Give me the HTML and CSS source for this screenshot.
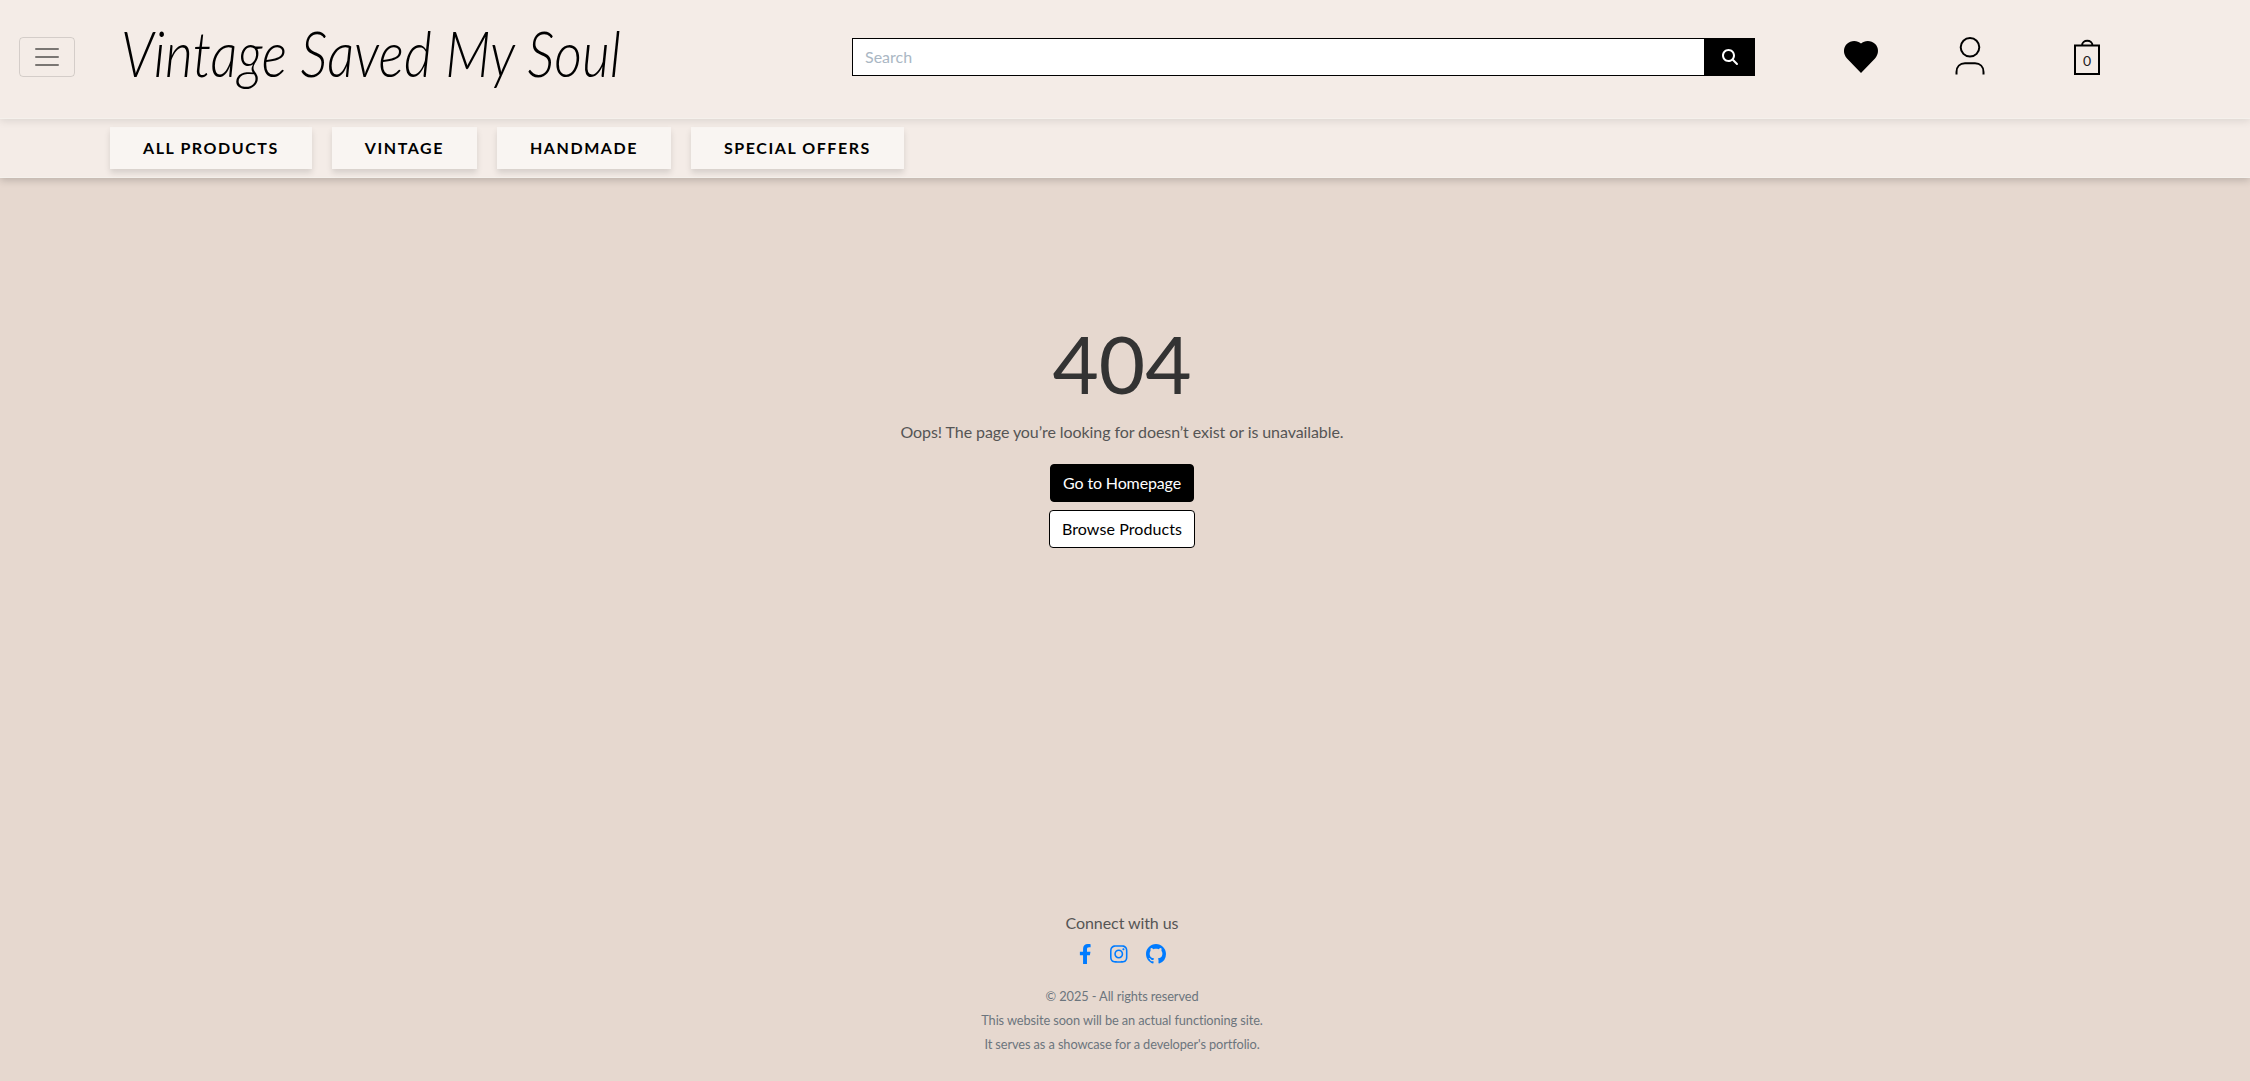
FILE: index.html
```html
<!DOCTYPE html>
<html lang="en">
<head>
<meta charset="utf-8">
<title>Vintage Saved My Soul</title>
<link rel="stylesheet" href="styles.css">
</head>
<body>
<header class="header">
  <button class="toggler" aria-label="Menu"><svg width="30" height="30" viewBox="0 0 30 30"><path d="M4 7h22M4 15h22M4 23h22" stroke="#000" stroke-opacity=".5" stroke-width="2" stroke-linecap="round"/></svg></button>
  <a class="logo"><svg width="540" height="104" viewBox="0 0 540 104"><text x="10" y="70" textLength="500" lengthAdjust="spacingAndGlyphs">Vintage Saved My Soul</text></svg></a>
  <form class="search">
    <input class="search-input" placeholder="Search">
    <button class="search-button" type="button" aria-label="Search"><svg width="16" height="16" viewBox="0 0 512 512"><path fill="#fff" d="M416 208c0 45.900-14.900 88.300-40 122.700L502.600 457.400c12.500 12.500 12.500 32.800 0 45.300s-32.800 12.500-45.300 0L330.700 376c-34.400 25.200-76.800 40-122.700 40C93.100 416 0 322.900 0 208S93.100 0 208 0S416 93.100 416 208zM208 352a144 144 0 1 0 0-288 144 144 0 1 0 0 288z"/></svg></button>
  </form>
  <div class="actions">
    <svg class="heart" width="34" height="32" viewBox="0 0 34 32"><path d="M17 32L3 17.500C-1 13-1 6.600 2.800 3C7-1 13.500-.7 17 2.600C20.500-.7 27-1 31.200 3C35 6.600 35 13 31 17.500Z"/></svg>
    <svg class="person" width="30" height="38" viewBox="0 0 30 38"><g fill="none" stroke="#000" stroke-width="2"><circle cx="15" cy="10.300" r="9.300"/><path d="M1.500 37.500V35C1.500 29.500 5 26.300 10 26.300H20C25 26.300 28.500 29.500 28.500 35V37.500"/></g></svg>
    <div class="bag"><svg width="26" height="36" viewBox="0 0 26 36"><path d="M1 6.500H25V35H1ZM8 6.500C8 .2 18.500 .2 18.500 6.500" fill="none" stroke="#000" stroke-width="2"/></svg><span class="count">0</span></div>
  </div>
</header>
<nav class="nav"><a class="nav-link">All Products</a><a class="nav-link">Vintage</a><a class="nav-link">Handmade</a><a class="nav-link">Special Offers</a></nav>
<main class="main">
  <h1 class="code">404</h1>
  <p class="message">Oops! The page you’re looking for doesn’t exist or is unavailable.</p>
  <a class="btn btn-dark">Go to Homepage</a>
  <a class="btn btn-light">Browse Products</a>
</main>
<footer class="footer">
  <p class="connect">Connect with us</p>
  <div class="social">
    <svg width="12.500" height="20" viewBox="0 0 320 512"><path d="M279.140 288l14.220-92.660h-88.910v-60.130c0-25.350 12.420-50.060 52.240-50.060h40.420V6.260S260.430 0 225.360 0c-73.220 0-121.080 44.380-121.080 124.720v70.620H22.890V288h81.390v224h100.170V288z"/></svg>
    <svg width="17.500" height="20" viewBox="0 0 448 512"><path d="M224.100 141c-63.600 0-114.900 51.300-114.900 114.900s51.300 114.900 114.900 114.900S339 319.500 339 255.900 287.700 141 224.100 141zm0 189.600c-41.100 0-74.700-33.500-74.700-74.700s33.500-74.700 74.700-74.700 74.700 33.500 74.700 74.700-33.600 74.700-74.700 74.700zm146.400-194.300c0 14.900-12 26.800-26.800 26.800-14.900 0-26.800-12-26.800-26.800s12-26.800 26.800-26.800 26.800 12 26.800 26.800zm76.100 27.200c-1.700-35.900-9.900-67.700-36.200-93.900-26.200-26.200-58-34.400-93.900-36.200-37-2.100-147.900-2.100-184.900 0-35.800 1.700-67.600 9.900-93.900 36.100s-34.400 58-36.200 93.900c-2.100 37-2.100 147.900 0 184.900 1.700 35.900 9.900 67.700 36.200 93.900s58 34.400 93.900 36.200c37 2.100 147.900 2.100 184.900 0 35.900-1.700 67.700-9.900 93.900-36.200 26.200-26.200 34.400-58 36.200-93.900 2.100-37 2.100-147.800 0-184.800zM398.800 388c-7.800 19.600-22.900 34.700-42.600 42.600-29.500 11.700-99.500 9-132.100 9s-102.700 2.600-132.100-9c-19.600-7.800-34.700-22.900-42.600-42.600-11.700-29.500-9-99.500-9-132.100s-2.600-102.700 9-132.100c7.800-19.600 22.900-34.700 42.600-42.600 29.500-11.700 99.500-9 132.100-9s102.700-2.600 132.100 9c19.600 7.800 34.700 22.900 42.600 42.600 11.700 29.500 9 99.500 9 132.100s2.700 102.700-9 132.100z"/></svg>
    <svg width="20" height="20" viewBox="0 0 16 16"><path d="M8 0C3.580 0 0 3.580 0 8c0 3.540 2.290 6.530 5.470 7.590.4.070.55-.17.55-.38 0-.19-.01-.82-.01-1.490-2.010.37-2.530-.49-2.690-.94-.09-.23-.48-.94-.82-1.130-.28-.15-.68-.52-.01-.53.63-.01 1.080.58 1.230.82.72 1.210 1.870.87 2.330.66.07-.52.28-.87.51-1.070-1.780-.2-3.640-.89-3.640-3.950 0-.87.31-1.590.82-2.150-.08-.2-.36-1.020.08-2.120 0 0 .67-.21 2.200.82.640-.18 1.320-.27 2-.27s1.360.09 2 .27c1.530-1.040 2.200-.82 2.200-.82.440 1.100.16 1.920.08 2.120.51.560.82 1.270.82 2.150 0 3.070-1.870 3.750-3.650 3.950.29.25.54.73.54 1.480 0 1.070-.01 1.930-.01 2.200 0 .21.15.46.55.38A8.010 8.010 0 0 0 16 8c0-4.420-3.580-8-8-8z"/></svg>
  </div>
  <p class="note">© 2025 - All rights reserved</p>
  <p class="note">This website soon will be an actual functioning site.</p>
  <p class="note">It serves as a showcase for a developer's portfolio.</p>
</footer>
</body>
</html>
```
FILE: styles.css
```css
* { box-sizing: border-box; }
body { margin: 0; height: 1081px; display: flex; flex-direction: column; background: #e6d8cf; font: 16px/24px Lato, sans-serif; color: #555; overflow: hidden; }
p, h1 { margin: 0; }
svg { display: block; overflow: visible; }
.header { height: 119px; flex: none; display: flex; align-items: flex-start; background: #f4ece7; border-bottom: 1px solid #f5f1ec; box-shadow: 0 2px 8px rgba(0,0,0,.1); position: relative; z-index: 2; }
.toggler { width: 56px; height: 40px; flex: none; margin: 37px 0 0 19px; padding: 4px 12px; border: 1px solid rgba(0,0,0,.13); border-radius: 4px; background: none; }
.logo { margin: 7px 0 0 36px; width: 540px; flex: none; }
.logo text { font: italic 300 64px Lato, cursive; fill: #000; }
.search { display: flex; margin: 38px 0 0 201px; width: 903px; height: 38px; flex: none; }
.search-input { flex: 1; border: 1px solid #000; padding: 6px 12px; font: 16px/24px Lato, sans-serif; border-radius: 0; background: #fff; }
.search-input::placeholder { color: #aab7c4; opacity: 1; }
.search-button { width: 50px; border: 0; background: #000; display: grid; place-items: center; padding: 0; }
.actions { display: flex; }
.heart { margin: 41px 0 0 89px; }
.person { margin: 37px 0 0 77px; }
.bag { position: relative; margin: 39px 0 0 89px; }
.count { position: absolute; left: 0; right: 0; top: 10px; text-align: center; font-size: 14px; line-height: 24px; color: #222; }
.nav { height: 59px; flex: none; display: flex; gap: 20px; padding: 8px 0 0 110px; background: #f4ece7; border-bottom: 1px solid #f5f1ec; box-shadow: 0 2px 8px rgba(0,0,0,.2); position: relative; }
.nav-link { height: 42px; padding: 0 33px; background: #f9f5f2; color: #000; font-weight: 700; letter-spacing: 1.56px; line-height: 42px; text-transform: uppercase; box-shadow: 0 4px 6px rgba(0,0,0,.12); }
.main { width: 2244px; display: flex; flex-direction: column; align-items: center; padding-top: 137px; }
.code { font-size: 80px; line-height: 96px; font-weight: 400; color: #333; }
.message { margin: 9px 0 20px; letter-spacing: -.08px; }
.btn { height: 38px; padding: 6px 12px; border: 1px solid #000; border-radius: 4px; margin-bottom: 8px; }
.btn-dark { background: #000; color: #fff; letter-spacing: -.14px; }
.btn-light { background: #fff; color: #000; letter-spacing: .08px; }
.footer { width: 2244px; margin-top: auto; display: flex; flex-direction: column; align-items: center; padding-bottom: 25px; }
.connect { letter-spacing: -.08px; }
.social { display: flex; gap: 18.500px; margin: 9px 0 20px; fill: #007bff; }
.note { font-size: 12.800px; letter-spacing: -.1px; color: #6c757d; }
```
